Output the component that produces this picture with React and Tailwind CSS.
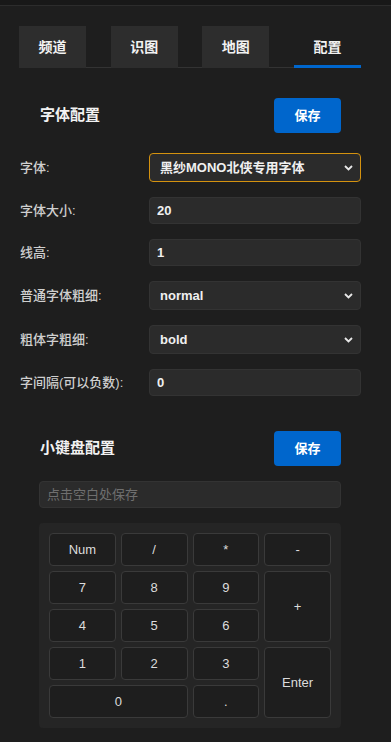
import { useState } from 'react'

const tabs = ['频道', '识图', '地图', '配置']

function Chevron() {
  return (
    <svg
      className="pointer-events-none absolute right-[8px] top-1/2 -translate-y-1/2"
      width="9"
      height="6"
      viewBox="0 0 9 6"
      fill="none"
    >
      <path d="M1 1l3.5 3.5L8 1" stroke="#e8e8e8" strokeWidth="1.8" />
    </svg>
  )
}

function SelectBox({ value, options, active }) {
  return (
    <div className="relative w-[212px]">
      <select
        defaultValue={value}
        className={`h-[29px] w-full appearance-none rounded-[4px] border bg-[#2b2b2b] pl-[10px] pr-[24px] text-[13px] font-bold text-[#f0f0f0] outline-none ${
          active ? 'border-[#d4920f]' : 'border-[#333333]'
        }`}
      >
        {options.map((o) => (
          <option key={o}>{o}</option>
        ))}
      </select>
      <Chevron />
    </div>
  )
}

function TextBox({ value }) {
  return (
    <input
      defaultValue={value}
      className="h-[27px] w-[212px] rounded-[4px] border border-[#333333] bg-[#2b2b2b] px-[7px] text-[13px] font-bold text-[#f0f0f0] outline-none"
    />
  )
}

function Row({ label, children }) {
  return (
    <div className="flex items-center justify-between pl-[1px]">
      <span className="text-[13px] font-medium text-[#cfcfcf]">{label}</span>
      {children}
    </div>
  )
}

function SectionHead({ title }) {
  return (
    <div className="flex items-center justify-between pl-[21px] pr-[20px]">
      <h2 className="text-[15px] font-bold text-[#f2f2f2]">{title}</h2>
      <button className="h-[35px] w-[67px] rounded-[4px] bg-[#0066cc] text-[13px] font-bold text-white">
        保存
      </button>
    </div>
  )
}

const keys = [
  { k: 'Num' },
  { k: '/' },
  { k: '*' },
  { k: '-' },
  { k: '7' },
  { k: '8' },
  { k: '9' },
  { k: '+', span: 'row-span-2' },
  { k: '4' },
  { k: '5' },
  { k: '6' },
  { k: '1' },
  { k: '2' },
  { k: '3' },
  { k: 'Enter', span: 'row-span-2' },
  { k: '0', span: 'col-span-2' },
  { k: '.' },
]

export default function App() {
  const [tab, setTab] = useState(3)

  return (
    <div
      className="min-h-[742px] bg-[#1e1e1e] pb-[14px]"
      style={{ fontFamily: '"Liberation Sans", "Noto Sans CJK SC", sans-serif' }}
    >
      <div className="h-[6px] border-b border-[#2c2c2c] bg-[#181818]" />

      <div className="ml-[19px] w-[342px]">
        {/* Tabs */}
        <div className="mt-[20px] flex justify-between border-b border-[#333333]">
          {tabs.map((t, i) => (
            <button
              key={t}
              onClick={() => setTab(i)}
              className={`-mb-px flex h-[42px] w-[67px] items-center justify-center text-[14px] font-bold text-[#f2f2f2] ${
                i === tab ? 'border-b-[3px] border-[#0066cc] pt-[3px]' : 'bg-[#2d2d2d]'
              }`}
            >
              {t}
            </button>
          ))}
        </div>

        {/* 字体配置 */}
        <div className="mt-[30px]">
          <SectionHead title="字体配置" />
        </div>
        <div className="mt-[20px] flex flex-col gap-[15px]">
          <Row label="字体:">
            <SelectBox value="黑纱MONO北侠专用字体" options={['黑纱MONO北侠专用字体']} active />
          </Row>
          <Row label="字体大小:">
            <TextBox value="20" />
          </Row>
          <Row label="线高:">
            <TextBox value="1" />
          </Row>
          <Row label="普通字体粗细:">
            <SelectBox value="normal" options={['normal', 'bold', 'lighter']} />
          </Row>
          <Row label="粗体字粗细:">
            <SelectBox value="bold" options={['normal', 'bold', 'bolder']} />
          </Row>
          <Row label="字间隔(可以负数):">
            <TextBox value="0" />
          </Row>
        </div>

        {/* 小键盘配置 */}
        <div className="mt-[35px]">
          <SectionHead title="小键盘配置" />
        </div>
        <div className="mt-[15px] px-[20px]">
          <input
            placeholder="点击空白处保存"
            className="h-[27px] w-full rounded-[4px] border border-[#333333] bg-[#2b2b2b] px-[7px] text-[13px] text-[#e0e0e0] outline-none placeholder:text-[#6f6f6f]"
          />
          <div className="mt-[15px] grid grid-cols-4 auto-rows-[33px] gap-[5px] rounded-[4px] bg-[#252525] p-[10px]">
            {keys.map(({ k, span }) => (
              <button
                key={k}
                className={`flex items-center justify-center rounded-[4px] border border-[#3a3a3a] bg-[#1e1e1e] text-[13px] text-[#dcdcdc] ${span || ''}`}
              >
                {k}
              </button>
            ))}
          </div>
        </div>
      </div>
    </div>
  )
}
